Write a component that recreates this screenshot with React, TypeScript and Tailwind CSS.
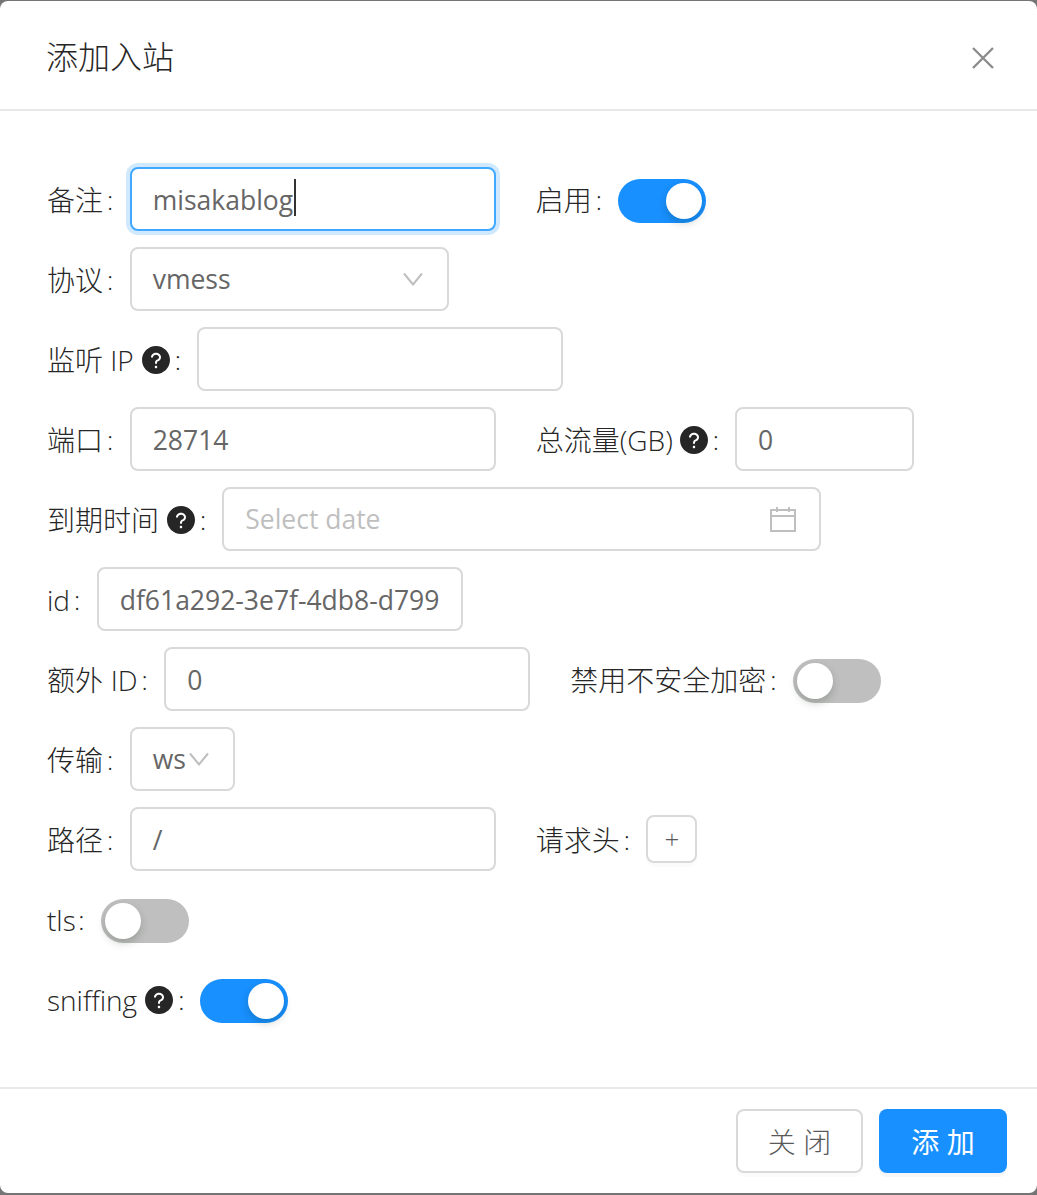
import React from "react";
import { AiFillQuestionCircle } from "react-icons/ai";

const FONT = "[font-family:'Open_Sans','Noto_Sans_CJK_SC',sans-serif]";

// Libellé de champ, le deux-points est ajouté à la fin
function Label({ children, help }: { children: React.ReactNode; help?: boolean }) {
  return (
    <label className="flex items-center shrink-0 mt-[2px] text-[28px] text-[#262626] font-light">
      {children}
      {help && <AiFillQuestionCircle className="ml-[6px] w-8 h-8 text-[#262626]" />}
      <span className={`${help ? "ml-[3px] mr-4" : "ml-1 mr-[16.5px]"} text-[26px]`}>:</span>
    </label>
  );
}

function Latin({ children }: { children: React.ReactNode }) {
  return <span className="text-[28px]">{children}</span>;
}

function TextInput({ value, width, focused }: { value?: string; width: string; focused?: boolean }) {
  return (
    <div className={`relative ${width}`}>
      <input
        readOnly
        value={value ?? ""}
        className={`w-full h-16 rounded-lg border-2 pt-[2px] pl-[21px] pr-[22px] text-[26.5px] text-[#666666] bg-white outline-none ${
          focused
            ? "border-[#40a9ff] shadow-[0_0_0_4px_rgba(24,144,255,0.2)]"
            : "border-[#d9d9d9]"
        }`}
      />
      {focused && <div className="absolute left-[164px] top-[12px] w-[2px] h-[37px] bg-[#333333]" />}
    </div>
  );
}

function Chevron() {
  return (
    <svg viewBox="0 0 20 14" className="w-5 h-[14px] shrink-0" fill="none" stroke="#bfbfbf" strokeWidth="2">
      <path d="M1 1.5 10 12.5 19 1.5" />
    </svg>
  );
}

function Select({ value, width }: { value: string; width: string }) {
  return (
    <div className={`h-16 rounded-lg border-2 border-[#d9d9d9] pl-[21px] pr-6 flex items-center justify-between text-[26.5px] text-[#666666] ${width}`}>
      <span className="mt-[2px]">{value}</span>
      <Chevron />
    </div>
  );
}

function Switch({ on }: { on?: boolean }) {
  return (
    <div className={`mt-1 w-[88px] h-11 rounded-full p-1 flex ${on ? "bg-[#1890ff] justify-end" : "bg-[#bfbfbf] justify-start"}`}>
      <div className="w-9 h-9 rounded-full bg-white shadow-[0_4px_8px_rgba(0,35,11,0.2)]" />
    </div>
  );
}

function Row({ children }: { children: React.ReactNode }) {
  return <div className="h-20 flex items-center gap-10">{children}</div>;
}

function Item({ children }: { children: React.ReactNode }) {
  return <div className="flex items-center">{children}</div>;
}

export default function App() {
  return (
    <div className={`${FONT} h-[1195px] bg-[#757575] pt-px pb-[2px]`}>
      <div className="h-full bg-white rounded-lg flex flex-col">
        {/* En-tête */}
        <div className="h-[110px] shrink-0 border-b-2 border-[#e8e8e8] pt-1 pl-[47px] pr-[43px] flex items-center justify-between">
          <h1 className="-ml-px text-[32px] text-[#262626] font-light">添加入站</h1>
          <svg viewBox="0 0 22 22" className="w-[22px] h-[22px] mt-[2px]" fill="none" stroke="#8c8c8c" strokeWidth="2.4">
            <path d="M1 1 21 21M21 1 1 21" />
          </svg>
        </div>

        {/* Formulaire */}
        <div className="flex-1 pt-12 pl-[47px]">
          <Row>
            <Item>
              <Label>备注</Label>
              <TextInput value="misakablog" width="w-[366px]" focused />
            </Item>
            <Item>
              <Label>启用</Label>
              <Switch on />
            </Item>
          </Row>
          <Row>
            <Item>
              <Label>协议</Label>
              <Select value="vmess" width="w-[319px]" />
            </Item>
          </Row>
          <Row>
            <Item>
              <Label help>
                监听&nbsp;<Latin>IP</Latin>
              </Label>
              <TextInput width="w-[366px]" />
            </Item>
          </Row>
          <Row>
            <Item>
              <Label>端口</Label>
              <TextInput value="28714" width="w-[366px]" />
            </Item>
            <Item>
              <Label help>
                总流量<span className="-mr-px text-[28px]">(GB)</span>
              </Label>
              <TextInput value="0" width="w-[179px]" />
            </Item>
          </Row>
          <Row>
            <Item>
              <Label help>到期时间</Label>
              <div className="w-[599px] h-16 rounded-lg border-2 border-[#d9d9d9] pl-[21px] pr-[23px] flex items-center justify-between text-[26.5px] text-[#bfbfbf]">
                <span className="mt-[2px]">Select date</span>
                <svg viewBox="0 0 26 26" className="w-[26px] h-[26px]" fill="none" stroke="#bfbfbf" strokeWidth="2">
                  <path d="M1 4H25V25H1ZM1 10H25M7 1V6M19 1V6" />
                </svg>
              </div>
            </Item>
          </Row>
          <Row>
            <Item>
              <Label>
                <Latin>id</Latin>
              </Label>
              <TextInput value="df61a292-3e7f-4db8-d799" width="w-[366px]" />
            </Item>
          </Row>
          <Row>
            <Item>
              <Label>
                额外&nbsp;<span className="pl-[0.5px] text-[28px]">ID</span>
              </Label>
              <TextInput value="0" width="w-[366px]" />
            </Item>
            <Item>
              <Label>禁用不安全加密</Label>
              <Switch />
            </Item>
          </Row>
          <Row>
            <Item>
              <Label>传输</Label>
              <Select value="ws" width="w-[105px]" />
            </Item>
          </Row>
          <Row>
            <Item>
              <Label>路径</Label>
              <TextInput value="/" width="w-[366px]" />
            </Item>
            <Item>
              <Label>请求头</Label>
              <button className="w-[51px] h-12 rounded-lg border-2 border-[#d9d9d9] text-[26px] font-light text-[#595959] shadow-[0_4px_0_rgba(0,0,0,0.015)] flex items-center justify-center">
                +
              </button>
            </Item>
          </Row>
          <Row>
            <Item>
              <Label>
                <span className="-mr-[1.5px] text-[28px]">tls</span>
              </Label>
              <Switch />
            </Item>
          </Row>
          <Row>
            <Item>
              <Label help>
                <Latin>sniffing</Latin>
              </Label>
              <Switch on />
            </Item>
          </Row>
        </div>

        {/* Pied de page */}
        <div className="h-[106px] shrink-0 border-t-2 border-[#e8e8e8] pr-[30px] flex items-center justify-end gap-4 text-[28px]">
          <button className="w-[127px] h-16 pt-[2px] rounded-lg border-2 border-[#d9d9d9] text-[#595959] font-light shadow-[0_4px_0_rgba(0,0,0,0.015)]">
            关 闭
          </button>
          <button className="w-[128px] h-16 pt-[2px] rounded-lg bg-[#1890ff] text-white shadow-[0_4px_0_rgba(0,0,0,0.035)]">
            添 加
          </button>
        </div>
      </div>
    </div>
  );
}
